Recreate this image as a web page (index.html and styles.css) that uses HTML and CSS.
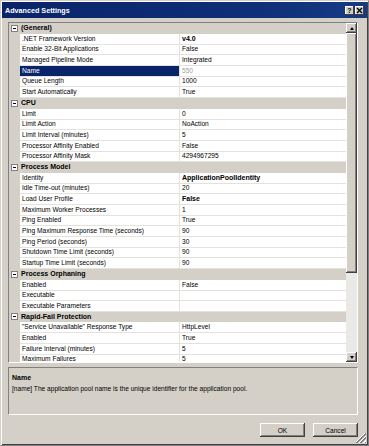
FILE: index.html
```html
<!DOCTYPE html>
<html lang="en">

<head>
  <meta charset="UTF-8">
  <title>Advanced Settings</title>
  <link rel="stylesheet" href="styles.css">
</head>

<body>
  <div class="window">
    <div class="titlebar">
      <span class="title">Advanced Settings</span>
      <div class="caption-buttons">
        <span class="cap-btn">?</span>
        <span class="cap-btn">
          <svg width="7" height="7" viewBox="0 0 7 7"><path d="M1 1L6 6M6 1L1 6" stroke="#000" stroke-width="1.4"/></svg>
        </span>
      </div>
    </div>

    <div class="content">
      <div class="grid-box">
        <div class="grid-rows" id="gridRows"></div>
        <div class="scrollbar">
          <div class="sb-btn"><span class="arrow up"></span></div>
          <div class="sb-track">
            <div class="sb-thumb"></div>
          </div>
          <div class="sb-btn"><span class="arrow down"></span></div>
        </div>
      </div>

      <div class="desc">
        <div class="desc-title">Name</div>
        <div class="desc-text">[name] The application pool name is the unique identifier for the application pool.</div>
      </div>

      <div class="buttons">
        <button class="btn">OK</button>
        <button class="btn">Cancel</button>
      </div>
    </div>
    <div class="grip"></div>
  </div>

  <script>
    // Property grid data
    const sections = [
      { name: "(General)", items: [
        [".NET Framework Version", "v4.0", "bold"],
        ["Enable 32-Bit Applications", "False"],
        ["Managed Pipeline Mode", "Integrated"],
        ["Name", "550", "selected"],
        ["Queue Length", "1000"],
        ["Start Automatically", "True"]
      ]},
      { name: "CPU", items: [
        ["Limit", "0"],
        ["Limit Action", "NoAction"],
        ["Limit Interval (minutes)", "5"],
        ["Processor Affinity Enabled", "False"],
        ["Processor Affinity Mask", "4294967295"]
      ]},
      { name: "Process Model", items: [
        ["Identity", "ApplicationPoolIdentity", "bold"],
        ["Idle Time-out (minutes)", "20"],
        ["Load User Profile", "False", "bold"],
        ["Maximum Worker Processes", "1"],
        ["Ping Enabled", "True"],
        ["Ping Maximum Response Time (seconds)", "90"],
        ["Ping Period (seconds)", "30"],
        ["Shutdown Time Limit (seconds)", "90"],
        ["Startup Time Limit (seconds)", "90"]
      ]},
      { name: "Process Orphaning", items: [
        ["Enabled", "False"],
        ["Executable", ""],
        ["Executable Parameters", ""]
      ]},
      { name: "Rapid-Fail Protection", items: [
        ["\"Service Unavailable\" Response Type", "HttpLevel"],
        ["Enabled", "True"],
        ["Failure Interval (minutes)", "5"],
        ["Maximum Failures", "5"],
        ["Shutdown Executable", ""]
      ]}
    ];

    const gridRows = document.getElementById("gridRows");

    sections.forEach((section) => {
      const head = document.createElement("div");
      head.className = "row section";
      head.innerHTML = `<span class="gutter"><span class="toggle"></span></span><span class="section-name">${section.name}</span>`;
      gridRows.appendChild(head);

      section.items.forEach(([label, value, flag]) => {
        const row = document.createElement("div");
        row.className = "row item" + (flag ? " " + flag : "");
        row.innerHTML = `<span class="gutter"></span><span class="label">${label}</span><span class="value">${value}</span>`;
        gridRows.appendChild(row);
      });
    });
  </script>
</body>

</html>
```

FILE: styles.css
```css
body {
  margin: 0;
  font-family: "Liberation Sans", Arial, sans-serif;
  font-size: 6.6px;
  color: #000;
  background: #d4d0c8;
}

.window {
  position: relative;
  width: 369px;
  height: 446px;
  box-sizing: border-box;
  border: 1px solid #808080;
  border-top-color: #d4d0c8;
  border-left-color: #d4d0c8;
  box-shadow: inset 1px 1px 0 #fff, inset -1px -1px 0 #404040;
  display: flex;
  flex-direction: column;
  overflow: hidden;
}

.titlebar {
  height: 16px;
  margin: 1px 1px 0;
  padding: 0 3px 0 3px;
  display: flex;
  align-items: center;
  justify-content: space-between;
  background: linear-gradient(to right, #0a246a, #0f2f78 70%, #153a84);
  color: #fff;
}

.title {
  font-size: 7.2px;
  font-weight: bold;
}

.caption-buttons {
  display: flex;
  gap: 1px;
}

.cap-btn {
  width: 9px;
  height: 9px;
  display: flex;
  align-items: center;
  justify-content: center;
  background: #d4d0c8;
  color: #000;
  font-weight: bold;
  font-size: 7px;
  box-shadow: inset -1px -1px 0 #404040, inset 1px 1px 0 #fff;
}

.content {
  flex: 1;
  display: flex;
  flex-direction: column;
  padding: 4px 10px 0 7px;
}

.grid-box {
  height: 341px;
  display: flex;
  border: 1px solid #808080;
  border-right-color: #fff;
  border-bottom-color: #fff;
  box-sizing: border-box;
  background: #fff;
}

.grid-rows {
  flex: 1;
  overflow: hidden;
}

.row {
  height: 10.7px;
  display: grid;
  grid-template-columns: 11px 160px 1fr;
  align-items: center;
  line-height: 10px;
  white-space: nowrap;
}

.gutter {
  height: 100%;
  background: #d4d0c8;
  display: flex;
  align-items: center;
  justify-content: center;
}

.section {
  background: #d4d0c8;
}

.section-name {
  grid-column: 2 / 4;
  font-weight: bold;
  font-size: 7px;
  padding-left: 1px;
}

.toggle {
  width: 7px;
  height: 7px;
  box-sizing: border-box;
  border: 1px solid #808080;
  background: #fff;
  position: relative;
}

.toggle::after {
  content: "";
  position: absolute;
  left: 1px;
  top: 2px;
  width: 3px;
  height: 1px;
  background: #000;
}

.item .label,
.item .value {
  height: 100%;
  box-sizing: border-box;
  border-bottom: 1px solid #e4e2dd;
  padding-left: 2px;
  display: flex;
  align-items: center;
}

.item .label {
  border-right: 1px solid #e4e2dd;
}

.item.bold .value {
  font-weight: bold;
  font-size: 7px;
}

.item.selected .label {
  background: #0a246a;
  color: #fff;
}

.item.selected .value {
  color: #a0a0a0;
}

.scrollbar {
  width: 11px;
  display: flex;
  flex-direction: column;
  background: #e8e6e1;
}

.sb-btn,
.sb-thumb {
  background: #d4d0c8;
  box-shadow: inset -1px -1px 0 #404040, inset 1px 1px 0 #fff, inset -2px -2px 0 #808080;
}

.sb-btn {
  height: 10px;
  display: flex;
  align-items: center;
  justify-content: center;
}

.arrow {
  width: 0;
  height: 0;
  border-left: 2.5px solid transparent;
  border-right: 2.5px solid transparent;
}

.arrow.up {
  border-bottom: 3px solid #000;
}

.arrow.down {
  border-top: 3px solid #000;
}

.sb-track {
  flex: 1;
  background: #ebe9e5;
}

.sb-thumb {
  height: 240px;
}

.desc {
  height: 48px;
  margin-top: 4px;
  box-sizing: border-box;
  border: 1px solid #808080;
  border-right-color: #fff;
  border-bottom-color: #fff;
  padding: 4px 3px 0;
}

.desc-title {
  font-weight: bold;
  font-size: 7px;
  line-height: 11px;
}

.desc-text {
  line-height: 11px;
}

.buttons {
  display: flex;
  justify-content: flex-end;
  gap: 8px;
  margin-top: 8px;
}

.btn {
  width: 45px;
  height: 14px;
  padding: 0;
  border: none;
  background: #d4d0c8;
  font-family: inherit;
  font-size: 6.6px;
  box-shadow: inset -1px -1px 0 #404040, inset 1px 1px 0 #fff, inset -2px -2px 0 #808080;
}

.grip {
  position: absolute;
  right: 2px;
  bottom: 2px;
  width: 10px;
  height: 10px;
  background: linear-gradient(135deg, transparent 40%, #fff 40%, #fff 47%, #808080 47%, #808080 55%, transparent 55%, transparent 62%, #fff 62%, #fff 69%, #808080 69%, #808080 77%, transparent 77%, transparent 84%, #fff 84%, #fff 90%, #808080 90%);
}
```
